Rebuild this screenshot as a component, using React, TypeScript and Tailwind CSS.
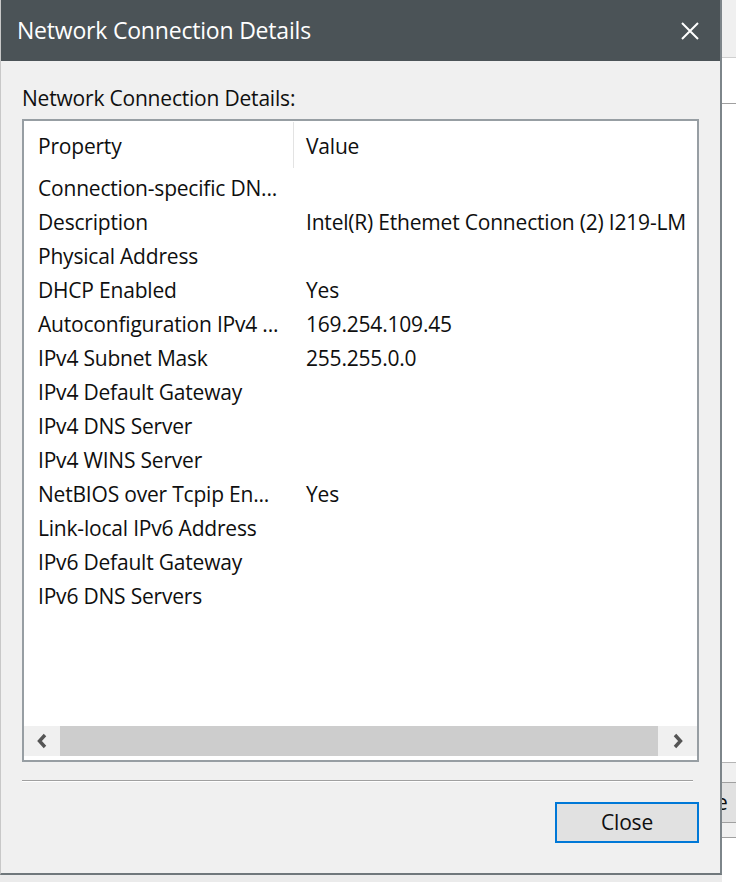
export default function App() {
  const rows: [string, string][] = [
    ["Connection-specific DN...", ""],
    ["Description", "Intel(R) Ethemet Connection (2) I219-LM"],
    ["Physical Address", ""],
    ["DHCP Enabled", "Yes"],
    ["Autoconfiguration IPv4 ...", "169.254.109.45"],
    ["IPv4 Subnet Mask", "255.255.0.0"],
    ["IPv4 Default Gateway", ""],
    ["IPv4 DNS Server", ""],
    ["IPv4 WINS Server", ""],
    ["NetBIOS over Tcpip En...", "Yes"],
    ["Link-local IPv6 Address", ""],
    ["IPv6 Default Gateway", ""],
    ["IPv6 DNS Servers", ""],
  ];
  return (
    <div className="w-[736px] h-[882px] flex items-start bg-[#ebebeb] overflow-hidden font-['Open_Sans',sans-serif] text-[#0f0f0f]">
      <div className="w-[722px] h-[875px] shrink-0 flex flex-col border-l border-l-[#c8c8c8] border-r-2 border-r-[#7d858a] border-b-2 border-b-[#6f777b] bg-[#f0f0f0]">
        <div className="h-[61px] shrink-0 bg-[#4b5357] flex items-center justify-between pl-[16px] pr-[21px]">
          <span className="text-white text-[23px] leading-none tracking-[-0.2px]">Network Connection Details</span>
          <svg width="18" height="18" viewBox="0 0 18 18" className="block">
            <path d="M1 1 L17 17 M17 1 L1 17" stroke="#ffffff" strokeWidth="2" />
          </svg>
        </div>
        <div className="flex-1 flex flex-col px-[21px]">
          <div className="mt-[23px] h-[28px] pt-[2px] flex items-center text-[21px] tracking-[-0.2px]">Network Connection Details:</div>
          <div className="mt-[7px] w-[677px] h-[643px] border-2 border-[#979ea3] bg-white flex flex-col text-[21px] tracking-[-0.2px]">
            <div className="flex h-[49px] shrink-0 items-center">
              <div className="w-[269px] pl-[14px] pt-[2px]">Property</div>
              <div className="w-px h-[46px] self-start mt-[1px] bg-[#e3e3e3]" />
              <div className="pl-[12px] pt-[2px]">Value</div>
            </div>
            {rows.map(([k, v], i) => (
              <div key={i} className="flex h-[34px] shrink-0 items-center pt-[3px] whitespace-nowrap">
                <div className="w-[270px] pl-[14px] overflow-hidden">{k}</div>
                <div className="pl-[12px] overflow-hidden">{v}</div>
              </div>
            ))}
            <div className="flex-1" />
            <div className="h-[30px] shrink-0 flex bg-[#f0f0f0]">
              <div className="w-[36px] flex items-center justify-center">
                <svg width="12" height="18" viewBox="0 0 12 18">
                  <path d="M9 3 L3.5 9 L9 15" stroke="#555555" strokeWidth="3.4" fill="none" />
                </svg>
              </div>
              <div className="flex-1 bg-[#cdcdcd]" />
              <div className="w-[39px] flex items-center justify-center">
                <svg width="12" height="18" viewBox="0 0 12 18">
                  <path d="M3 3 L8.5 9 L3 15" stroke="#555555" strokeWidth="3.4" fill="none" />
                </svg>
              </div>
            </div>
            <div className="h-[4px] shrink-0 bg-white" />
          </div>
          <div className="mt-[18px] w-[671px] h-[1px] bg-[#a0a0a0]" />
          <div className="w-[671px] h-[1px] bg-white" />
          <div className="mt-[20px] self-end w-[144px] h-[41px] border-2 border-[#0078d7] bg-[#e1e1e1] flex items-center justify-center text-[21px] tracking-[-0.2px]">
            Close
          </div>
        </div>
      </div>
      <div className="flex-1 h-[882px] flex flex-col overflow-hidden">
        <div className="h-[57px] bg-[#f0f0f0]" />
        <div className="h-px bg-[#cfcfcf]" />
        <div className="h-[45px] bg-white" />
        <div className="h-px bg-[#a0a0a0]" />
        <div className="h-[658px] bg-white" />
        <div className="h-px bg-[#b4b4b4]" />
        <div className="h-[19px] bg-[#f0f0f0]" />
        <div className="h-px bg-[#a0a0a0]" />
        <div className="h-[39px] bg-[#e1e1e1] overflow-hidden flex items-center text-[21px] leading-none">
          <span className="-ml-[6px]">e</span>
        </div>
        <div className="h-px bg-[#a0a0a0]" />
        <div className="h-[14px] bg-[#f0f0f0]" />
        <div className="h-px bg-[#a0a0a0]" />
        <div className="flex-1 bg-white" />
      </div>
    </div>
  );
}
